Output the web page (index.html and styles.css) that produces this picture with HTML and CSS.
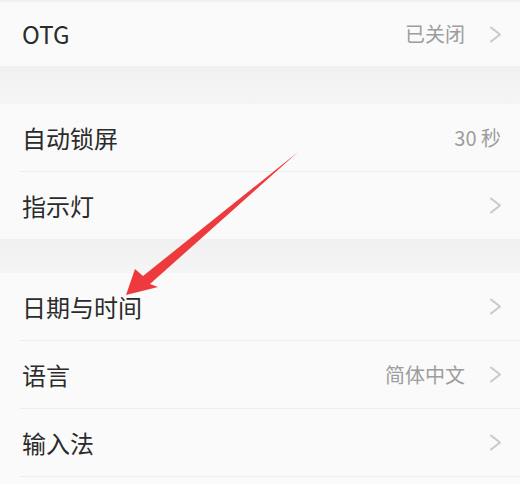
FILE: index.html
```html
<!DOCTYPE html>
<html lang="zh-CN">
<head>
<meta charset="utf-8">
<link rel="stylesheet" href="styles.css">
</head>
<body>
<div class="screen">
  <div class="group group-first">
    <div class="row">
      <span class="label">OTG</span>
      <span class="value">已关闭</span>
      <svg class="chev" viewBox="0 0 13 17" width="13" height="17"><polyline points="2,1.5 11,8.5 2,15.5"/></svg>
    </div>
  </div>
  <div class="gap gap-1"></div>
  <div class="group">
    <div class="row sep">
      <span class="label">自动锁屏</span>
      <span class="value value-end">30 秒</span>
    </div>
    <div class="row">
      <span class="label">指示灯</span>
      <svg class="chev" viewBox="0 0 13 17" width="13" height="17"><polyline points="2,1.5 11,8.5 2,15.5"/></svg>
    </div>
  </div>
  <div class="gap gap-2"></div>
  <div class="group">
    <div class="row sep">
      <span class="label">日期与时间</span>
      <svg class="chev" viewBox="0 0 13 17" width="13" height="17"><polyline points="2,1.5 11,8.5 2,15.5"/></svg>
    </div>
    <div class="row sep">
      <span class="label">语言</span>
      <span class="value">简体中文</span>
      <svg class="chev" viewBox="0 0 13 17" width="13" height="17"><polyline points="2,1.5 11,8.5 2,15.5"/></svg>
    </div>
    <div class="row sep">
      <span class="label">输入法</span>
      <svg class="chev" viewBox="0 0 13 17" width="13" height="17"><polyline points="2,1.5 11,8.5 2,15.5"/></svg>
    </div>
  </div>
  <svg class="arrow" viewBox="0 0 520 484" width="520" height="484">
    <polygon points="126,295 135,269 143,276 298,152 150,284 158,287"/>
  </svg>
</div>
</body>
</html>
```
FILE: styles.css
```css
html, body {
  margin: 0;
  padding: 0;
  background: #fafafa;
}
.screen {
  position: relative;
  width: 520px;
  height: 484px;
  overflow: hidden;
  font-family: "Noto Sans CJK SC", "Noto Sans", sans-serif;
  background: #fafafa;
}
.group {
  background: #fafafa;
}
.group-first {
  border-top: 2px solid #f0f0f0;
}
.row {
  display: flex;
  align-items: center;
  margin-left: 20px;
  padding-left: 2px;
  padding-right: 18px;
  height: 67px;
}
.group-first .row {
  height: 64px;
}
.row.sep {
  border-bottom: 1px solid #ececec;
}
.label {
  flex: 1;
  font-size: 24px;
  color: #2b2b2b;
  line-height: 1;
}
.value {
  font-size: 20px;
  color: #9d9d9d;
  margin-right: 24px;
  line-height: 1;
}
.value-end {
  margin-right: 1px;
}
.chev {
  display: block;
}
.chev polyline {
  fill: none;
  stroke: #c9c9c9;
  stroke-width: 2;
  stroke-linecap: round;
  stroke-linejoin: round;
}
.gap {
  background: linear-gradient(#f0f0f0, #f5f5f5);
}
.gap-1 {
  height: 38px;
}
.gap-2 {
  height: 34px;
}
.arrow {
  position: absolute;
  left: 0;
  top: 0;
  pointer-events: none;
}
.arrow polygon {
  fill: #ee3a3c;
}
```
